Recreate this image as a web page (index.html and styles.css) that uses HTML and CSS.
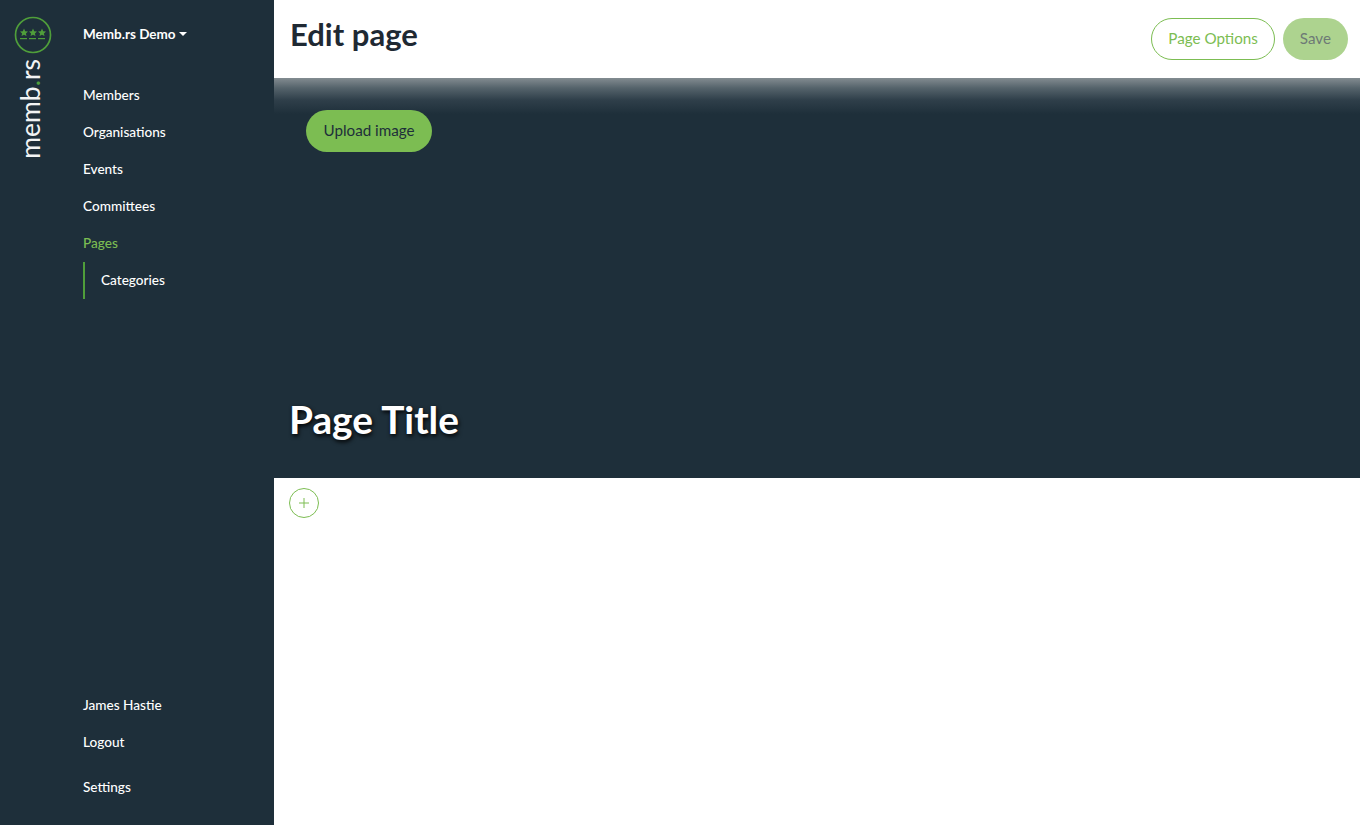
FILE: index.html
```html
<!DOCTYPE html>
<html lang="en">
<head>
<meta charset="utf-8">
<title>Edit page</title>
<link rel="stylesheet" href="styles.css">
</head>
<body>
<div class="app">
  <aside class="sidebar">
    <div class="rail">
      <svg class="logo-mark" width="38" height="38" viewBox="0 0 38 38" aria-hidden="true">
        <circle cx="19" cy="19" r="17.5" fill="none" stroke="#4f9e3a" stroke-width="1.7"/>
        <g fill="#4f9e3a">
          <path d="M10 12.6l1.2 2.6 2.8.3-2.1 1.9.6 2.7-2.5-1.4-2.5 1.4.6-2.7-2.1-1.9 2.8-.3z"/>
          <path d="M19 12.6l1.2 2.6 2.8.3-2.1 1.9.6 2.7-2.5-1.4-2.5 1.4.6-2.7-2.1-1.9 2.8-.3z"/>
          <path d="M28 12.6l1.2 2.6 2.8.3-2.1 1.9.6 2.7-2.5-1.4-2.5 1.4.6-2.7-2.1-1.9 2.8-.3z"/>
          <rect x="6" y="22" width="7" height="1.2"/>
          <rect x="15" y="22" width="7" height="1.2"/>
          <rect x="24" y="22" width="7" height="1.2"/>
        </g>
      </svg>
      <div class="wordmark">memb<span class="dot">.</span>rs</div>
    </div>
    <nav class="nav">
      <div class="org">Memb.rs Demo<span class="caret"></span></div>
      <ul class="menu">
        <li><a class="link">Members</a></li>
        <li><a class="link">Organisations</a></li>
        <li><a class="link">Events</a></li>
        <li><a class="link">Committees</a></li>
        <li><a class="link active">Pages</a></li>
        <li class="sub"><a class="link">Categories</a></li>
      </ul>
      <ul class="menu bottom">
        <li><a class="link">James Hastie</a></li>
        <li><a class="link">Logout</a></li>
        <li class="settings"><a class="link">Settings</a></li>
      </ul>
    </nav>
  </aside>
  <main class="main">
    <header class="topbar">
      <h1 class="heading">Edit page</h1>
      <div class="actions">
        <button class="btn btn-outline">Page Options</button>
        <button class="btn btn-save">Save</button>
      </div>
    </header>
    <section class="hero">
      <button class="btn btn-upload">Upload image</button>
      <h2 class="page-title">Page Title</h2>
    </section>
    <section class="content">
      <button class="add" aria-label="Add block">
        <svg width="12" height="12" viewBox="0 0 12 12" aria-hidden="true"><path d="M6 1v10M1 6h10" stroke="#7cbd52" stroke-width="1" fill="none"/></svg>
      </button>
    </section>
  </main>
</div>
</body>
</html>
```
FILE: styles.css
```css
* { box-sizing: border-box; }
html, body { margin: 0; height: 100%; }
body { font-family: Lato, "Open Sans", sans-serif; background: #fff; color: #1e2f3a; overflow: hidden; }
ul { list-style: none; margin: 0; padding: 0; }
.app { display: flex; height: 825px; }

.sidebar { width: 274px; flex: none; background: #1e2f3a; display: flex; color: #fff; }
.rail { width: 66px; flex: none; padding: 16px 0 0 14px; display: flex; flex-direction: column; }
.logo-mark { display: block; }
.wordmark { writing-mode: vertical-rl; transform: rotate(180deg); font-size: 26.5px; line-height: 38px; width: 38px; margin: 5px 0 0 -3px; color: #f2f4f4; font-weight: 400; }
.dot { color: #4f9e3a; }

.nav { flex: 1; padding: 17px 0 19px 17px; display: flex; flex-direction: column; }
.org { height: 34px; line-height: 34px; font-weight: 700; font-size: 13.5px; }
.caret { display: inline-block; margin-left: 3px; vertical-align: 3px; border-top: 4px solid #fff; border-left: 4px solid transparent; border-right: 4px solid transparent; }
.menu { margin-top: 26px; }
.menu li { height: 37px; line-height: 33px; }
.link { color: #fff; font-weight: 500; font-size: 13.6px; }
.link.active { color: #7cbd52; }
.sub { border-left: 2px solid #4f9e3a; padding-left: 16px; }
.bottom { margin-top: auto; }
.settings { margin-top: 8px; }

.main { flex: 1; display: flex; flex-direction: column; min-width: 0; }
.topbar { height: 78px; flex: none; padding: 0 12px 0 17px; display: flex; justify-content: space-between; align-items: flex-start; }
.heading { margin: 15px 0 0 -1px; font-size: 31px; line-height: 38px; font-weight: 700; color: #1f2933; }
.actions { display: flex; gap: 8px; margin-top: 18px; }
.btn { height: 42px; border-radius: 21px; font: 400 15.2px/20px Lato, sans-serif; padding: 0 16px 2px; border: 1px solid transparent; }
.btn-outline { background: #fff; border-color: #7cbd52; color: #7cbd52; }
.btn-save { background: #add38f; color: #6d7a76; }
.btn-upload { background: #7cbd52; color: #1e2f3a; padding: 0 16.5px 2px; }

.hero { height: 400px; flex: none; padding: 32px 32px 0; display: flex; flex-direction: column; align-items: flex-start; background: linear-gradient(#838c91, #55636b 10px, #2f3f4a 22px, #1e2f3a 36px); }
.page-title { margin: 244px 0 0 -17px; font-size: 38.8px; line-height: 46px; font-weight: 700; color: #fff; text-shadow: 1px 2px 4px #000; }

.content { flex: 1; padding: 10px 15px; }
.add { width: 30px; height: 30px; border-radius: 50%; border: 1px solid #7cbd52; background: #fff; padding: 0; display: flex; align-items: center; justify-content: center; }
```
